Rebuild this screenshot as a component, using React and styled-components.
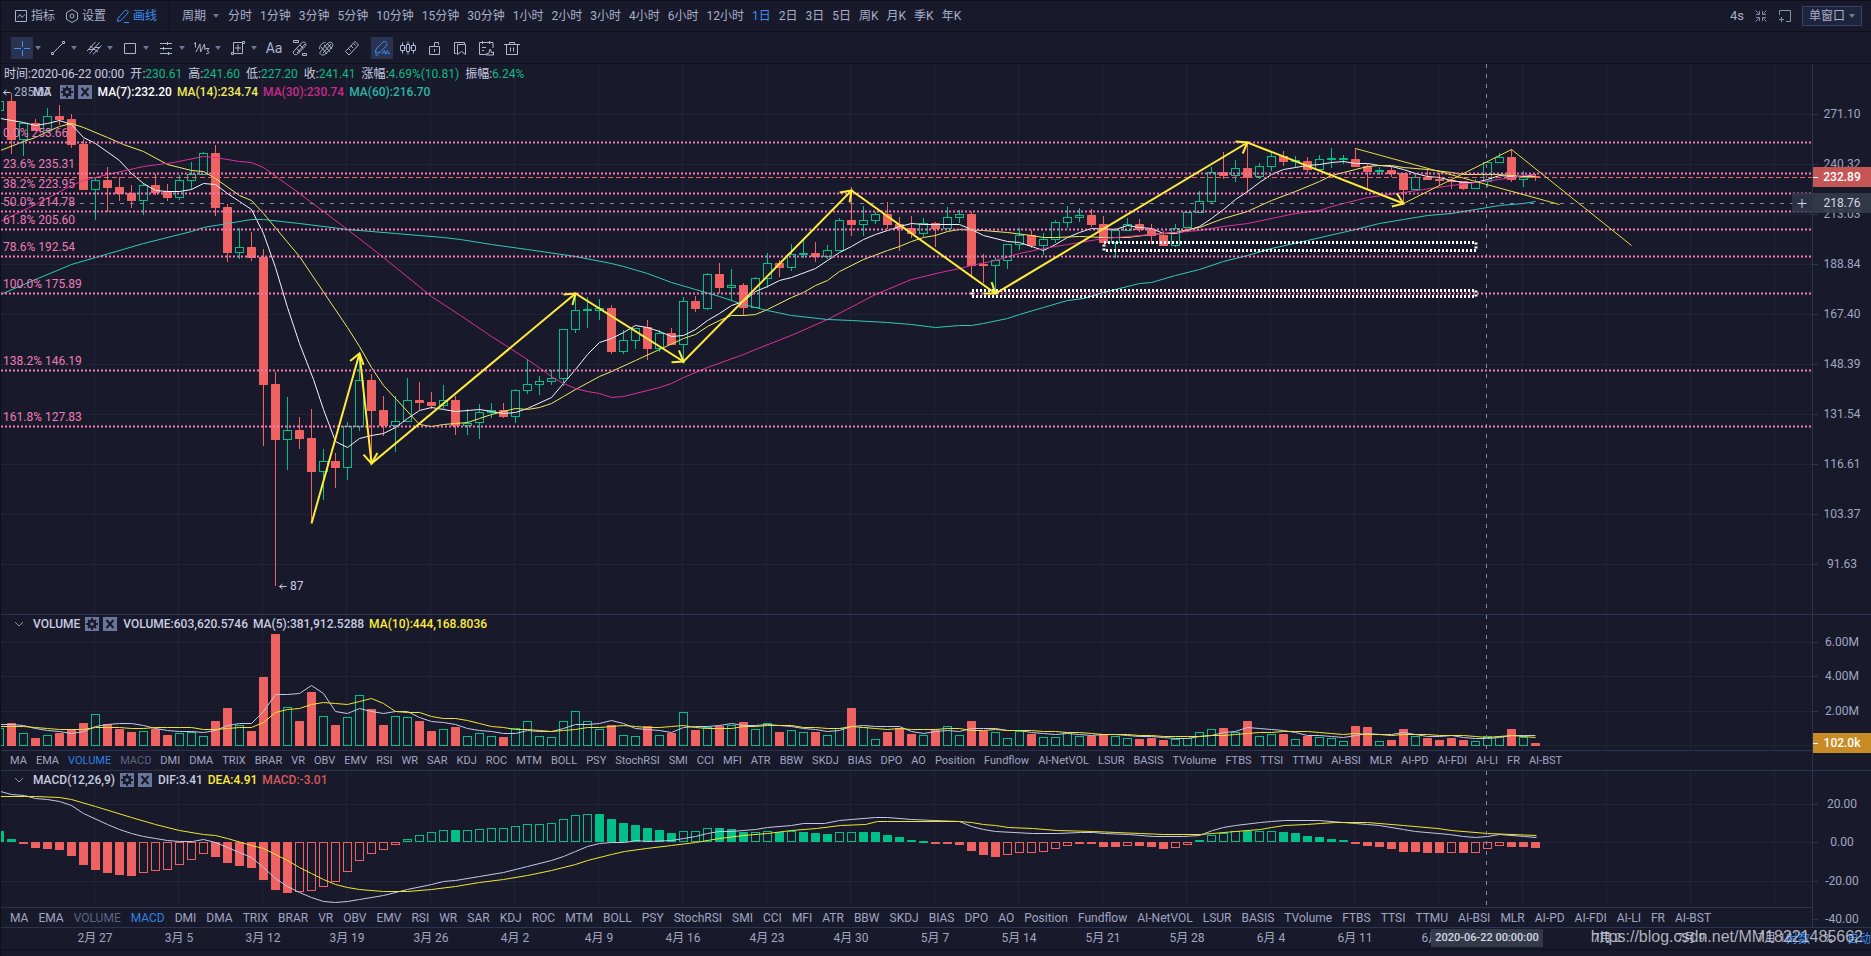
import React, { useState } from "react";
import styled, { createGlobalStyle } from "styled-components";

const GlobalStyle = createGlobalStyle`
  * {
    box-sizing: border-box;
  }
  body {
    margin: 0;
    background: #181a2b;
  }
  body, button, select {
    font-family: Roboto, "Noto Sans CJK SC", sans-serif;
    font-size: 12px;
    line-height: 16px;
  }
`;

const RED = "#ee6361";
const GREEN = "#00c087";
const YELLOW = "#ffeb3b";
const PINK = "#f07ab8";

const Page = styled.div`
  position: relative;
  display: flex;
  flex-direction: column;
  min-height: 100vh;
  overflow: hidden;
  color: #a9aeca;
  background: #181a2b;
  border-top: 1px solid #0e101c;

  &::after {
    content: "";
    position: absolute;
    top: 0;
    bottom: 0;
    left: 0;
    width: 1px;
    background: #0e101c;
  }
`;

const TopBar = styled.header`
  display: flex;
  align-items: center;
  height: 31px;
  border-bottom: 1px solid #0e101c;
`;

const MenuGroup = styled.div`
  display: flex;
  align-items: center;
  align-self: stretch;
  gap: 10px;
  width: 170px;
  padding-left: 14px;
  border-right: 1px solid #0e101c;
`;

const TextButton = styled.button`
  display: flex;
  align-items: center;
  gap: ${(p) => (p.$loose ? 6 : 3)}px;
  padding: 0;
  border: 0;
  background: none;
  color: ${(p) => (p.$active ? "#3c8ef0" : "#a9aeca")};
  white-space: nowrap;
  cursor: pointer;
`;

const Periods = styled.nav`
  display: flex;
  align-items: center;
  gap: 8px;
  padding-left: 12px;
`;

const TopRight = styled.div`
  display: flex;
  align-items: center;
  gap: 10px;
  margin-left: auto;
  padding-right: 9px;
  font-size: 13px;
`;

const IconButton = styled.button`
  display: flex;
  padding: 0;
  border: 0;
  background: none;
  color: #8a90b0;
`;

const WindowPicker = styled.label`
  position: relative;
  display: flex;
  align-items: center;

  select {
    appearance: none;
    width: 60px;
    height: 20px;
    padding: 0 6px;
    border: 1px solid #363f66;
    background: #1f243d;
    color: #a9aeca;
  }
  svg {
    position: absolute;
    right: 6px;
    pointer-events: none;
  }
`;

const DrawBar = styled.div`
  display: flex;
  align-items: center;
  gap: 4px;
  height: 32px;
  padding: 0 11px;
  border-bottom: 1px solid #0e101c;
`;

const ToolGroups = styled.div`
  display: flex;
  align-items: center;
  margin-right: -4px;
`;

const Tool = styled.button`
  display: flex;
  align-items: center;
  justify-content: center;
  width: 22px;
  height: 22px;
  padding: 0;
  margin-left: ${(p) => (p.$apart ? "4px" : "0")};
  border: 0;
  background: ${(p) => (p.$active ? "#2a3450" : "none")};
  color: ${(p) => (p.$active ? "#3c8ef0" : "#b0b5d0")};
  font-size: 14px;
`;

const MoreButton = styled.button`
  display: flex;
  width: 14px;
  padding: 0 0 0 1px;
  border: 0;
  background: none;
  color: #6f7699;
`;

const Section = styled.section`
  display: grid;
  grid-template-columns: minmax(0, 1fr) 59px;
  border-bottom: 1px solid #2a3350;
`;

const Pane = styled.div`
  position: relative;
`;

const Plot = styled.svg`
  display: block;
  width: 100%;
  height: ${(p) => p.$height}px;
`;

const Axis = styled.svg`
  display: block;
  width: 59px;
  height: 100%;
  border-left: 1px solid #2a3350;
  font-size: 12px;
  fill: #a0a5c2;
`;

const Legend = styled.div`
  position: absolute;
  top: ${(p) => p.$top}px;
  left: ${(p) => p.$left}px;
  display: flex;
  align-items: center;
  gap: ${(p) => (p.$strong ? 5 : 6)}px;
  color: #c8cce0;
  font-weight: ${(p) => (p.$strong ? 500 : 400)};
  white-space: nowrap;
`;

const LegendIcons = styled.span`
  display: flex;
  gap: 4px;
  margin-left: ${(p) => (p.$wide ? "3px" : "0")};
  margin-right: 1px;
`;

const LegendButton = styled.button`
  display: flex;
  align-items: center;
  justify-content: center;
  width: 14px;
  height: 14px;
  padding: 0;
  border: 0;
  background: #6c759b;
  color: #181a2b;
`;

const FoldButton = styled.button`
  display: flex;
  width: 16px;
  padding: 0;
  border: 0;
  background: none;
  color: #8a90b0;
`;

const Colored = styled.span`
  color: ${(p) => p.$color};
`;

const Tabs = styled.nav`
  display: flex;
  align-items: center;
  gap: ${(p) => (p.$small ? 9 : 10)}px;
  height: 20px;
  padding-left: 10px;
  border-top: 1px solid #2a3350;
  overflow: hidden;
`;

const Tab = styled.button`
  padding: 0;
  border: 0;
  background: none;
  font-size: ${(p) => (p.$small ? 11 : 12)}px;
  color: ${(p) => (p.$state === "on" ? "#2f80e0" : p.$state === "used" ? "#5d6383" : "#a0a5c2")};
  white-space: nowrap;
`;

const TimeAxis = styled.footer`
  position: relative;
  height: 22px;
  border-bottom: 1px solid #0e101c;
`;

const TimeTag = styled.span`
  position: absolute;
  top: 1px;
  left: 1431px;
  width: 112px;
  height: 18px;
  font-size: 11px;
  line-height: 18px;
  text-align: center;
  white-space: nowrap;
  font-weight: 500;
  color: #d5d8e6;
  background: rgba(54, 60, 74, 0.94);
`;

const ScaleButtons = styled.div`
  position: absolute;
  top: 3px;
  right: 0;
  display: flex;
  gap: 14px;
`;

const Watermark = styled.span`
  position: absolute;
  top: 0;
  right: 8px;
  font-family: "Liberation Sans", Arial, sans-serif;
  font-size: 16px;
  line-height: 18px;
  color: rgba(205, 207, 214, 0.85);
`;

const periods = [
  "分时", "1分钟", "3分钟", "5分钟", "10分钟", "15分钟", "30分钟", "1小时", "2小时", "3小时",
  "4小时", "6小时", "12小时", "1日", "2日", "3日", "5日", "周K", "月K", "季K", "年K",
];

const indicators = [
  "MA", "EMA", "VOLUME", "MACD", "DMI", "DMA", "TRIX", "BRAR", "VR", "OBV", "EMV", "RSI", "WR",
  "SAR", "KDJ", "ROC", "MTM", "BOLL", "PSY", "StochRSI", "SMI", "CCI", "MFI", "ATR", "BBW", "SKDJ",
  "BIAS", "DPO", "AO", "Position", "Fundflow", "AI-NetVOL", "LSUR", "BASIS", "TVolume", "FTBS",
  "TTSI", "TTMU", "AI-BSI", "MLR", "AI-PD", "AI-FDI", "AI-LI", "FR", "AI-BST",
];

const dates = [
  "2月 27", "3月 5", "3月 12", "3月 19", "3月 26", "4月 2", "4月 9", "4月 16", "4月 23", "4月 30",
  "5月 7", "5月 14", "5月 21", "5月 28", "6月 4", "6月 11", "6月 18", "6月 25", "7月 2", "7月 9", "7月 16",
];

// up, high, body top, body bottom, low
const candles = [
  [1, 37, 37, 47, 47], [0, 29, 37, 76, 90], [1, 59, 59, 76, 92], [0, 55, 59, 67, 67], [1, 44, 52, 67, 67],
  [0, 41, 52, 56, 61], [0, 50, 55, 81, 84], [0, 75, 80, 126, 126], [1, 113, 116, 126, 156], [0, 103, 116, 124, 148],
  [0, 113, 123, 130, 137], [0, 121, 129, 137, 144], [1, 119, 121, 137, 151], [0, 110, 121, 129, 131], [0, 120, 127, 134, 137],
  [1, 111, 116, 134, 136], [1, 98, 110, 117, 125], [1, 88, 89, 111, 111], [0, 81, 89, 144, 152], [0, 140, 143, 189, 198],
  [1, 164, 183, 189, 195], [0, 168, 183, 194, 197], [0, 185, 193, 321, 382], [0, 308, 320, 376, 522], [1, 333, 366, 376, 406],
  [0, 353, 366, 375, 385], [0, 345, 374, 408, 459], [1, 385, 397, 408, 436], [0, 389, 397, 404, 424], [1, 358, 362, 404, 416],
  [1, 291, 316, 363, 367], [0, 310, 316, 347, 399], [0, 332, 346, 362, 372], [1, 332, 357, 362, 388], [1, 314, 336, 358, 358],
  [0, 318, 336, 339, 346], [0, 328, 338, 342, 345], [1, 321, 336, 342, 345], [0, 332, 336, 362, 371], [1, 345, 359, 362, 371],
  [1, 340, 348, 359, 375], [1, 339, 346, 349, 354], [0, 339, 346, 353, 354], [1, 325, 326, 353, 359], [1, 295, 320, 327, 330],
  [1, 312, 317, 321, 331], [1, 306, 314, 318, 321], [1, 265, 265, 315, 322], [1, 230, 246, 266, 269], [1, 233, 245, 247, 264],
  [1, 235, 244, 247, 256], [0, 241, 244, 288, 290], [1, 266, 276, 288, 290], [1, 264, 264, 277, 285], [0, 256, 263, 285, 296],
  [1, 266, 269, 285, 288], [0, 264, 269, 281, 281], [1, 233, 237, 281, 300], [0, 232, 237, 245, 248], [1, 209, 210, 245, 246],
  [0, 199, 210, 224, 229], [1, 205, 221, 224, 236], [0, 219, 221, 244, 252], [1, 213, 214, 244, 244], [1, 189, 199, 215, 224],
  [0, 196, 199, 204, 213], [1, 180, 190, 204, 207], [1, 175, 189, 191, 194], [0, 178, 189, 193, 198], [1, 181, 186, 193, 195],
  [1, 154, 156, 187, 187], [0, 123, 156, 161, 172], [1, 142, 156, 161, 172], [1, 148, 150, 157, 160], [0, 138, 150, 161, 165],
  [0, 153, 160, 165, 187], [0, 152, 164, 170, 174], [1, 154, 159, 170, 173], [0, 158, 159, 165, 183], [1, 143, 153, 165, 165],
  [1, 146, 150, 154, 159], [0, 148, 150, 202, 214], [0, 190, 200, 202, 219], [1, 193, 196, 202, 229], [1, 180, 180, 197, 205],
  [1, 164, 171, 181, 186], [0, 166, 171, 182, 184], [1, 169, 175, 182, 191], [1, 156, 158, 176, 179], [1, 142, 153, 159, 164],
  [1, 144, 151, 154, 158], [0, 145, 151, 161, 163], [0, 152, 160, 179, 179], [1, 164, 166, 179, 194], [1, 154, 160, 167, 167],
  [0, 155, 160, 166, 168], [0, 160, 165, 172, 180], [0, 167, 171, 182, 182], [1, 160, 164, 182, 183], [1, 148, 148, 164, 164],
  [1, 127, 137, 149, 149], [1, 103, 108, 138, 139], [0, 88, 108, 112, 115], [1, 96, 104, 112, 118], [0, 79, 104, 114, 129],
  [1, 99, 102, 113, 115], [1, 88, 92, 103, 107], [0, 87, 92, 98, 102], [1, 92, 96, 98, 104], [0, 93, 97, 106, 109],
  [1, 91, 95, 106, 107], [1, 84, 94, 96, 104], [1, 91, 94, 96, 100], [0, 84, 95, 103, 103], [0, 100, 102, 108, 126],
  [1, 103, 106, 108, 111], [0, 103, 106, 110, 113], [0, 109, 109, 126, 139], [1, 109, 113, 126, 126], [0, 105, 113, 116, 116],
  [0, 109, 115, 117, 122], [0, 115, 116, 118, 125], [0, 117, 117, 125, 126], [1, 115, 118, 125, 125], [1, 98, 98, 118, 123],
  [1, 89, 93, 99, 99], [0, 85, 93, 116, 118], [1, 107, 113, 116, 123], [0, 110, 112, 114, 117],
];

const volumes = [
  18, 23, 13, 8, 11, 13, 17, 23, 32, 22, 17, 14, 15, 17, 11, 13, 14, 10, 25, 38, 21, 15, 69, 112, 39, 25, 54,
  30, 21, 29, 51, 37, 21, 30, 29, 25, 15, 17, 19, 10, 13, 10, 9, 18, 25, 10, 9, 25, 35, 25, 17, 21, 11, 10,
  20, 11, 13, 34, 16, 19, 20, 21, 24, 17, 23, 14, 16, 14, 14, 11, 18, 38, 19, 7, 14, 18, 12, 11, 16, 20, 11,
  25, 15, 14, 8, 15, 12, 9, 9, 14, 10, 10, 12, 10, 8, 7, 8, 6, 7, 8, 14, 17, 18, 14, 25, 10, 12, 12, 7, 10,
  9, 8, 5, 20, 19, 5, 6, 17, 10, 8, 6, 8, 6, 5, 10, 10, 17, 9, 3,
];

const macd = [
  11, 3, -1.5, -6, -6.8, -8, -14, -23, -28, -31, -33, -34, -31, -29, -28, -23, -18, -12, -15, -21, -24, -26,
  -38, -48, -51, -50, -49, -45, -40, -30, -19, -12, -8, -3, 3, 7, 10, 12, 11.9, 12, 13, 14, 14.1, 16, 18, 18.1,
  19, 23, 27, 28, 27.9, 23, 19, 17, 14, 12, 9, 11, 11.1, 14, 13.9, 13, 10, 10.1, 11, 10, 10.5, 10, 9, 8, 10,
  10.1, 10, 9.9, 7, 5, 2, 1, -1.5, -1.6, -2.5, -9, -13, -15, -13, -11, -10.9, -10, -7, -4, -2, -2, -5, -5.1,
  -4, -4.1, -5, -7, -6, -3, 2, 7, 9, 11, 10.9, 11, 11.1, 10, 9, 6, 5, 3, 2, -2, -4, -5, -7, -10, -10.1, -11,
  -11.1, -11, -11.1, -11, -7, -4, -5, -5.1, -6,
];

const ma7 =
  "0,54 23,58 35,61 47,59 59,56 71,60 83,73 95,79 119,96 131,109 143,119 155,126 167,127 179,127 191,125 203,119 215,120 227,129 239,137 251,145 263,169 275,203 287,243 299,279 313,315 323,345 335,377 347,383 359,374 371,371 383,369 395,363 407,354 419,346 431,343 443,345 455,347 479,345 491,347 503,349 515,348 527,344 551,333 563,319 575,305 587,290 599,278 611,274 623,268 635,261 647,263 659,267 671,272 683,271 695,265 707,256 719,249 731,241 743,237 755,227 767,222 779,216 791,213 815,204 827,196 839,188 851,182 863,175 875,170 887,166 899,162 911,159 923,160 959,160 971,165 983,171 1007,177 1019,178 1031,182 1043,186 1055,180 1067,173 1079,168 1091,164 1115,165 1127,161 1139,163 1151,164 1163,169 1175,169 1187,166 1199,162 1211,154 1223,145 1235,135 1247,127 1259,118 1271,110 1283,105 1295,103 1307,101 1319,100 1331,98 1343,97 1355,99 1367,99 1379,101 1391,102 1403,105 1415,109 1427,112 1439,113 1451,116 1463,118 1475,118 1487,115 1499,111 1511,112 1523,112 1535,110";
const ma14 =
  "0,86 23,77 35,73 47,67 59,62 71,59 83,63 107,73 123,80 143,87 167,100 191,106 203,107 215,114 239,131 251,136 263,149 299,192 324,229 347,263 359,282 371,303 383,321 396,335 419,360 431,362 443,360 455,359 467,358 479,354 491,350 503,347 515,344 527,345 539,343 551,339 563,332 575,325 599,312 611,307 635,296 659,285 683,274 695,270 707,262 719,256 731,251 743,251 755,250 767,245 791,233 803,228 815,221 827,216 839,207 863,195 887,186 899,182 911,177 923,173 935,171 947,167 959,165 983,166 1007,168 1031,171 1043,173 1055,173 1079,172 1103,173 1127,173 1151,170 1163,169 1175,168 1187,165 1199,163 1223,154 1247,147 1271,136 1295,127 1319,117 1331,111 1343,108 1355,105 1367,102 1379,101 1391,101 1403,103 1427,105 1451,108 1463,110 1499,110 1511,111 1523,112 1535,112";
const ma30 =
  "0,157 35,140 71,121 83,116 107,110 143,102 173,98 203,92 215,93 239,97 251,98 263,103 299,129 347,165 383,193 431,232 460,251 491,272 527,295 551,312 563,319 575,324 587,327 599,329 611,333 623,332 635,329 659,323 671,319 683,313 707,303 743,290 755,285 793,270 827,255 875,230 911,215 940,208 959,204 971,201 995,196 1019,189 1043,184 1067,180 1103,174 1151,170 1175,168 1199,166 1223,162 1247,159 1295,149 1319,146 1331,142 1367,133 1403,128 1423,125 1451,121 1475,118 1499,115 1523,111 1535,110";
const ma60 =
  "0,230 35,215 71,200 95,193 143,179 191,167 203,163 227,159 251,155 263,155 299,159 347,165 395,169 443,173 460,175 491,180 527,185 575,192 611,199 623,202 647,209 671,218 695,225 719,232 743,240 767,246 791,251 827,255 851,256 887,258 911,260 935,263 959,261 971,261 983,259 1007,254 1019,250 1043,243 1067,236 1083,234 1103,228 1139,219 1151,218 1175,211 1199,205 1223,197 1247,191 1271,184 1307,176 1355,165 1379,159 1403,155 1427,151 1451,149 1475,145 1499,141 1523,139 1535,137";
const dif =
  "0,20 11,23 24,24 35,27 47,28 59,30 71,34 83,42 107,53 119,58 131,62 143,65 155,67 167,69 179,70 192,70 203,68 215,71 227,76 239,81 251,86 263,96 275,107 287,115 299,121 311,126 323,130 335,131 347,130 359,128 383,124 407,118 431,113 443,110 455,109 479,105 503,101 527,95 551,89 563,85 575,80 587,75 599,72 611,71 624,71 636,69 646,70 671,69 683,67 695,65 707,62 719,60 731,60 755,58 767,56 791,54 803,52 824,52 839,49 875,46 887,46 911,48 934,49 959,50 971,55 983,58 995,60 1032,62 1057,62 1080,61 1093,61 1104,62 1128,63 1153,65 1183,65 1199,64 1212,59 1223,56 1235,54 1260,51 1271,50 1284,49 1318,49 1355,52 1367,53 1379,54 1403,58 1415,60 1449,63 1463,65 1475,66 1487,65 1499,63 1524,65 1536,66";
const dea =
  "0,25 24,25 35,25 59,26 71,28 95,35 131,46 155,53 179,59 203,63 215,64 227,67 251,74 263,77 287,89 299,96 311,102 323,108 335,113 347,116 359,118 383,120 407,120 431,118 455,115 479,111 503,108 527,104 551,99 575,93 587,89 611,83 624,80 646,77 671,74 695,71 719,67 743,64 767,62 791,59 816,57 840,54 865,53 877,50 887,50 959,50 971,51 983,53 995,54 1008,56 1032,57 1057,59 1093,60 1116,61 1140,62 1163,63 1200,63 1212,62 1235,60 1260,58 1271,56 1284,54 1306,53 1320,52 1335,51 1367,51 1403,54 1437,57 1451,59 1487,62 1536,64";

const fibs = [
  [78, "0.0% 253.66"],
  [109, "23.6% 235.31"],
  [129, "38.2% 223.95"],
  [147, "50.0% 214.78"],
  [165, "61.8% 205.60"],
  [192, "78.6% 192.54"],
  [229, "100.0% 175.89"],
  [306, "138.2% 146.19"],
  [362, "161.8% 127.83"],
];

const wave = [
  [311, 459], [359, 289], [371, 399], [575, 229], [683, 297], [851, 126], [995, 229], [1247, 78], [1403, 139],
];

const priceTicks = ["271.10", "240.32", "213.03", "188.84", "167.40", "148.39", "131.54", "116.61", "103.37", "91.63"];

const CURSOR_X = 1486.5;

const xAt = (i) => (i - 1) * 12 + 11;

const average = (values, size, seed) =>
  values
    .map((_, i) => {
      let sum = 0;
      for (let k = 0; k < size; k++) sum += i - k >= 0 ? values[i - k] : seed;
      return `${xAt(i)},${Math.round(130 - sum / size)}`;
    })
    .join(" ");

const Line = ({ points, color, width = 1 }) => (
  <polyline points={points} transform="translate(.5 .5)" fill="none" stroke={color} strokeWidth={width} />
);

const Bar = ({ x, top, height, color, hollow }) =>
  hollow && height > 2 ? (
    <rect x={x - 3.5} y={top + 0.5} width={8} height={height - 1} fill="none" stroke={color} />
  ) : (
    <rect x={x - 4} y={top} width={9} height={Math.max(height, 2)} rx={0.5} fill={color} />
  );

const Grid = ({ rows }) => (
  <g stroke="#1f2336">
    {dates.map((d, i) => (
      <line key={d} x1={94.5 + i * 84} x2={94.5 + i * 84} y1={0} y2="100%" />
    ))}
    {rows.map((y) => (
      <line key={y} x1={0} x2="100%" y1={y + 0.5} y2={y + 0.5} />
    ))}
  </g>
);

const CursorLine = () => (
  <line x1={CURSOR_X} x2={CURSOR_X} y1={0} y2="100%" stroke="#858a9c" strokeDasharray="4 6" />
);

const arrowHead = (from, to) => {
  const back = Math.atan2(from[1] - to[1], from[0] - to[0]);
  const barb = (turn) => `${to[0] + 12 * Math.cos(back + turn)},${to[1] + 12 * Math.sin(back + turn)}`;
  return `${barb(0.62)} ${to.join(",")} ${barb(-0.62)}`;
};

const PricePlot = () => (
  <Plot $height={550} fontSize={12}>
    <Grid rows={priceTicks.map((_, i) => 50 + i * 50)} />
    {candles.map(([up, high, top, bottom, low], i) => {
      const x = xAt(i);
      const color = up ? GREEN : RED;
      return (
        <g key={i}>
          {high < top && <rect x={x} y={high} width={1} height={top - high} fill={color} />}
          {low > bottom && <rect x={x} y={bottom} width={1} height={low - bottom} fill={color} />}
          <Bar x={x} top={top} height={bottom - top} color={color} hollow={up} />
        </g>
      );
    })}
    <Line points={ma7} color="#f2f3f8" />
    <Line points={ma14} color="#efe860" />
    <Line points={ma30} color="#dc2f98" />
    <Line points={ma60} color="#30c8bc" />
    <line x1={0} x2="100%" y1={113.5} y2={113.5} stroke="#ee6361" strokeDasharray="5 3" />
    <line x1={0} x2="100%" y1={139.5} y2={139.5} stroke="#858a9c" strokeDasharray="4 6" />
    <CursorLine />
    {fibs.map(([y, label]) => (
      <g key={label}>
        <line x1={1} x2="100%" y1={y + 0.5} y2={y + 0.5} stroke={PINK} strokeWidth={2} strokeDasharray="2 2" />
        <text x={3} y={y - 5} fill={PINK}>{label}</text>
      </g>
    ))}
    <g fill="none" stroke="#fff" strokeWidth={3} strokeDasharray="2 2">
      <rect x={1104} y={178.5} width={372} height={8} />
      <rect x={972} y={226.5} width={504} height={6} />
    </g>
    <Line points="1355,84 1559,140" color="#e8d93c" />
    <Line points="1403,139 1511,85 1631,181" color="#e8d93c" />
    <Line points={wave.map((p) => p.join(",")).join(" ")} color={YELLOW} width={2} />
    {wave.slice(1).map((p, i) => (
      <Line key={i} points={arrowHead(wave[i], p)} color={YELLOW} width={2} />
    ))}
    <g fill="none" stroke="#c8cce0">
      <path d="M3.5 28.5h7M6.5 26l-3 2.5 3 2.5M279.5 522.5h7M282.5 520l-3 2.5 3 2.5" />
    </g>
    <text x={14} y={32} fill="#a9aeca">285.07</text>
    <text x={290} y={526} fill="#c8cce0">87</text>
    <svg x="100%" y={129} width={20} height={20} overflow="visible">
      <rect x={-20} width={20} height={20} fill="#30364a" fillOpacity={0.85} />
      <path d="M-14.5 10.5h9M-10 6v9" stroke="#d5d8e6" />
    </svg>
  </Plot>
);

const AxisTicks = ({ ticks }) =>
  ticks.map(([y, label]) => (
    <g key={label}>
      <rect x={0} y={y} width={5} height={1} fill="#2a3350" />
      <text x={29} y={y + 4} textAnchor="middle">{label}</text>
    </g>
  ));

const AxisTag = ({ y, label, color, text = "#fff", opacity = 1, mark }) => (
  <g>
    <rect x={0} y={y - 10} width={59} height={20} fill={color} fillOpacity={opacity} />
    {mark && <rect x={0} y={y} width={5} height={1} fill="#fff" />}
    <text x={29} y={y + 4} textAnchor="middle" fill={text} fontWeight={mark ? 500 : 400}>{label}</text>
  </g>
);

const Caret = ({ color = "currentColor" }) => (
  <svg width="8" height="6" viewBox="0 0 8 6" aria-hidden="true">
    <path d="M1 1h6L4 5z" fill={color} />
  </svg>
);

const Glyph = ({ d, size = 16, children }) => (
  <svg width={size} height={size} viewBox={`0 0 ${size} ${size}`} fill="none" stroke="currentColor" aria-hidden="true">
    {d && <path d={d} />}
    {children}
  </svg>
);

const glyphs = {
  cross: "M0 8.5h7M10 8.5h6M8.5 1v6M8.5 10v6",
  trend: "M4 12L12 4M1.5 12.5h2v2h-2zM12.5 1.5h2v2h-2z",
  channel: "M1 11L9.5 2M7 14.5L15.5 5.5M3.5 13.5L13.5 2.5M4 6l8 6M2.5 9.5h6M8.5 7.5H14",
  box: "M2.5 3.5h11v10h-11z",
  levels: "M2 3.5h12M2 8.5h12M2 13.5h12M9.5 2v3M5.5 7v3M10.5 12v3",
  waves: "M0 4l1.5-1.5v5M2 12l4-8 .5 8 4-8 .5 6M11.5 8.5H15L13 11c3 0 2.5 3.5-1 2.5",
  measure: "M3.5 2.5h9v11h-9zM8 4.5v7M5 8h6M12.5 1.5h2v2h-2zM1.5 12.5h2v2h-2z",
  magnet: "M1.5 .5h5v2h-5zM10.5 13.5h4v2h-4zM2 11l7.5-8c2.5-2.5 6 .5 3.5 3.5L5.5 14C3 16 0 13.5 2 11zM5 13l8-9M4.5 8.5L8 11.500M8 5l3 3",
  link: "M2.5 11.5l7-8c3-3 7 0 4.5 3.5l-6.5 7c-3 2.5-7 0-5-2.5zM1.5 9c0-4 3-6.5 6-6.5M5 13l8-9M6 5l6 7M3 7l6 7M9 3l5 6",
  ruler: "M1.5 11.5L11 1.5 14.5 5 5 15zM4.5 8.5l2 2M7 6l2 2M9.5 3.5l2 2",
  pen: "M1.5 13L2 9l7-7c2.5-1.5 5 1 3.5 3.5L6 12.5zM1.5 15h3M8 14l2.5-3.5 1 4 2-4 1 3H16",
  bars: "M.5 5.5h4v5h-4zM6.5 4.5h3v7h-3zM11.5 5.5h4v5h-4zM2.5 2.5v3M2.5 10.5v3M8 1.5v3M8 11.5v3M13.5 2.5v3M13.5 10.5v3M4.5 8h2M9.5 8h2",
  lock: "M3.5 6.5h10v8h-10zM8.5 6V2.5h4V5M8.5 9v3",
  bookmark: "M4.5 13.5h-2v-11h10v2M5.5 4.5h8v10l-4-3-4 3z",
  note: "M8 14.5H1.5v-12H15V8M4.5 1v3M11.5 1v3M4 7.5h4M4 10.5h2M8 14l3-1 1-4 2 4 1.5-1v3H8",
  trash: "M0 4.5h16M5.5 4V2.5h5V4M2.5 5v9.5h11V5M6.5 7.5v4M9.5 7.5v4",
};

const menuTools = [
  ["cross", "十字光标"],
  ["trend", "趋势线"],
  ["channel", "通道"],
  ["box", "形状"],
  ["levels", "水平线"],
  ["waves", "波浪"],
  ["measure", "测量"],
];
const plainTools = [
  ["magnet", "磁铁"],
  ["link", "连续"],
  ["ruler", "尺子"],
  ["pen", "画笔"],
  ["bars", "K线"],
  ["lock", "锁定"],
  ["bookmark", "收藏"],
  ["note", "记录"],
  ["trash", "删除"],
];

const LegendControls = ({ wide }) => (
  <LegendIcons $wide={wide}>
    <LegendButton aria-label="设置">
      <Glyph size={14}>
        <circle cx="7" cy="7" r="3" strokeWidth="2.5" />
        <path
          d="M7 1v3M7 10v3M1 7h3M10 7h3M3 3l1.5 1.5M9.5 9.5L11 11M11 3L9.5 4.5M4.5 9.5L3 11"
          strokeWidth="2"
        />
      </Glyph>
    </LegendButton>
    <LegendButton aria-label="关闭">
      <Glyph size={14}>
        <path d="M3.5 3l7 8M10.5 3l-7 8" strokeWidth="2" />
      </Glyph>
    </LegendButton>
  </LegendIcons>
);

const Fold = () => (
  <FoldButton aria-label="折叠">
    <Glyph size={14} d="M3 5l4 4 4-4" />
  </FoldButton>
);

const IndicatorTabs = ({ active, small }) => (
  <Tabs $small={small}>
    {indicators.map((name) => (
      <Tab
        key={name}
        $small={small}
        $state={name === active ? "on" : name === "VOLUME" || name === "MACD" ? "used" : "off"}
      >
        {name}
      </Tab>
    ))}
  </Tabs>
);

const App = () => {
  const [period, setPeriod] = useState("1日");

  return (
    <Page>
      <GlobalStyle />
      <TopBar>
        <MenuGroup>
          <TextButton>
            <Glyph size={14} d="M1.5 1.5h11v11h-11zM3.5 8.5l2.5-3 2 3 3-3" />
            指标
          </TextButton>
          <TextButton>
            <Glyph size={14}>
              <path d="M7 .5l5.5 3.2v6.6L7 13.5l-5.5-3.2V3.7z" />
              <circle cx="7" cy="7" r="2" />
            </Glyph>
            设置
          </TextButton>
          <TextButton $active>
            <Glyph size={14} d="M1.5 12.5L2 9l7-7.5c2-1 3.5.5 3 2.5l-7 7.5zM8 13.5h5" />
            画线
          </TextButton>
        </MenuGroup>
        <Periods>
          <TextButton $loose aria-haspopup="true">
            周期 <Caret color="#6f7699" />
          </TextButton>
          {periods.map((p) => (
            <TextButton key={p} $active={p === period} onClick={() => setPeriod(p)}>
              {p}
            </TextButton>
          ))}
        </Periods>
        <TopRight>
          <span>4s</span>
          <IconButton aria-label="收起">
            <Glyph
              size={14}
              d="M1.5 1.5l3 3M2 5.5h3.5V2M12.5 1.5l-3 3M12 5.5H8.5V2M1.5 12.5l3-3M2 8.5h3.5V12M12.5 12.5l-3-3M12 8.5H8.5V12"
            />
          </IconButton>
          <IconButton aria-label="新窗口">
            <Glyph size={14} d="M1.5 6V1.5h11v11H8M1 10.5h5M3.5 8v5" />
          </IconButton>
          <WindowPicker>
            <select aria-label="窗口">
              <option>单窗口</option>
            </select>
            <Caret color="#6f7699" />
          </WindowPicker>
        </TopRight>
      </TopBar>

      <DrawBar>
        <ToolGroups>
          {menuTools.map(([name, label], i) => (
            <React.Fragment key={name}>
              <Tool $active={i === 0} aria-label={label}>
                <Glyph d={glyphs[name]} />
              </Tool>
              <MoreButton aria-label={`${label}菜单`}>
                <Caret />
              </MoreButton>
            </React.Fragment>
          ))}
        </ToolGroups>
        <Tool>Aa</Tool>
        {plainTools.map(([name, label]) => (
          <Tool key={name} $active={name === "pen"} $apart={name === "pen"} aria-label={label}>
            <Glyph d={glyphs[name]} />
          </Tool>
        ))}
      </DrawBar>

      <Section>
        <Pane>
          <PricePlot />
          <Legend $top={2} $left={4}>
            <span>时间:2020-06-22 00:00</span>
            {[["开", "230.61"], ["高", "241.60"], ["低", "227.20"], ["收", "241.41"], ["涨幅", "4.69%(10.81)"], ["振幅", "6.24%"]].map(
              ([name, value]) => (
                <span key={name}>
                  {name}:<Colored $color="#10b981">{value}</Colored>
                </span>
              )
            )}
          </Legend>
          <Legend $top={20} $left={33} $strong>
            <span>MA</span>
            <LegendControls wide />
            <Colored $color="#fff">MA(7):232.20</Colored>
            <Colored $color="#f1e95c">MA(14):234.74</Colored>
            <Colored $color="#c92b8c">MA(30):230.74</Colored>
            <Colored $color="#2bb5a9">MA(60):216.70</Colored>
          </Legend>
        </Pane>
        <Axis>
          <AxisTicks ticks={priceTicks.map((t, i) => [50 + i * 50, t])} />
          <AxisTag y={139} label="218.76" color="#363c4c" text="#d5d8e6" opacity={0.9} />
          <AxisTag y={113} label="232.89" color="#c65656" mark />
        </Axis>
      </Section>

      <Section>
        <Pane>
          <Plot $height={135}>
            <Grid rows={[27, 61, 96, 130]} />
            {volumes.map((v, i) => (
              <Bar key={i} x={xAt(i)} top={131 - v} height={v} color={candles[i][0] ? GREEN : RED} hollow={candles[i][0]} />
            ))}
            <Line points={average(volumes, 5, 22)} color="#c3c8e4" />
            <Line points={average(volumes, 10, 19)} color="#f0e52e" />
            <CursorLine />
          </Plot>
          <Legend $top={1} $left={12} $strong>
            <Fold />
            <span>VOLUME</span>
            <LegendControls />
            <span>VOLUME:603,620.5746</span>
            <span>MA(5):381,912.5288</span>
            <Colored $color={YELLOW}>MA(10):444,168.8036</Colored>
          </Legend>
          <IndicatorTabs active="VOLUME" small />
        </Pane>
        <Axis>
          <AxisTicks ticks={[[27, "6.00M"], [61, "4.00M"], [96, "2.00M"]]} />
          <AxisTag y={128} label="102.0k" color="#c98b26" mark />
        </Axis>
      </Section>

      <Section>
        <Pane>
          <Plot $height={136}>
            <Grid rows={[33, 71, 110]} />
            {macd.map((v, i) => (
              <Bar
                key={i}
                x={xAt(i)}
                top={v > 0 ? 71 - Math.round(v) : 71}
                height={Math.round(Math.abs(v))}
                color={v > 0 ? GREEN : RED}
                hollow={i > 0 && v > macd[i - 1]}
              />
            ))}
            <Line points={dif} color="#c3c8e4" />
            <Line points={dea} color="#f0e52e" />
            <CursorLine />
          </Plot>
          <Legend $top={1} $left={12} $strong>
            <Fold />
            <span>MACD(12,26,9)</span>
            <LegendControls />
            <span>DIF:3.41</span>
            <Colored $color={YELLOW}>DEA:4.91</Colored>
            <Colored $color="#d9595a">MACD:-3.01</Colored>
          </Legend>
          <IndicatorTabs active="MACD" />
        </Pane>
        <Axis>
          <AxisTicks ticks={[[33, "20.00"], [71, "0.00"], [110, "-20.00"], [148, "-40.00"]]} />
        </Axis>
      </Section>

      <TimeAxis>
        <Plot $height={21} fontSize={12} fill="#a0a5c2">
          {dates.map((d, i) => (
            <text key={d} x={95 + i * 84} y={14} textAnchor="middle">{d}</text>
          ))}
        </Plot>
        <TimeTag>2020-06-22 00:00:00</TimeTag>
        <ScaleButtons>
          <TextButton $active>对数</TextButton>
          <TextButton>%</TextButton>
          <TextButton $active>自动</TextButton>
        </ScaleButtons>
        <Watermark>https://blog.csdn.net/MM18221485662</Watermark>
      </TimeAxis>
    </Page>
  );
};

export default App;
